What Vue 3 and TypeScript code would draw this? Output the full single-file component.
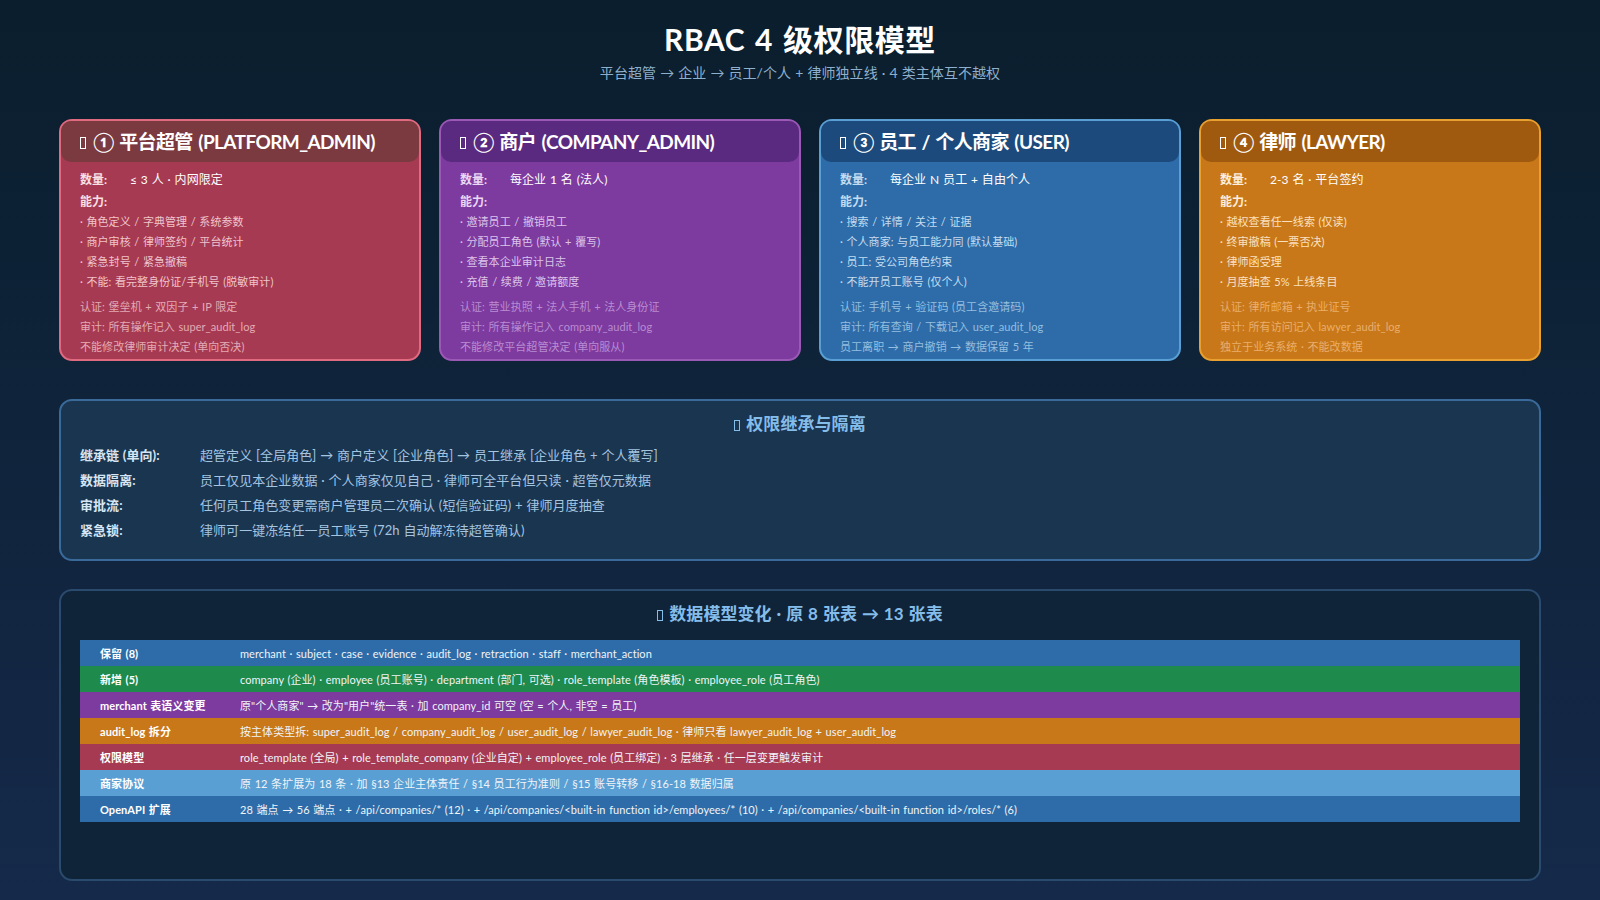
<template>
  <div class="page">
    <header class="head">
      <h1>RBAC 4 级权限模型</h1>
      <p>平台超管 → 企业 → 员工/个人 + 律师独立线 · 4 类主体互不越权</p>
    </header>

    <!-- 四个角色卡片 -->
    <section class="cards">
      <article v-for="c in cards" :key="c.key" class="card" :class="c.key">
        <h2 class="card-title"><i class="tofu"></i>{{ c.title }}</h2>
        <div class="card-body">
          <div class="line count"><b>数量:</b><span>{{ c.count }}</span></div>
          <div class="line"><b>能力:</b></div>
          <div v-for="a in c.abilities" :key="a" class="line ability">· {{ a }}</div>
          <div class="notes">
            <div v-for="n in c.notes" :key="n" class="line note">{{ n }}</div>
          </div>
        </div>
      </article>
    </section>

    <!-- 权限继承 -->
    <section class="inherit">
      <h3><i class="tofu small"></i>权限继承与隔离</h3>
      <div v-for="r in inheritRows" :key="r.label" class="inherit-row">
        <b>{{ r.label }}</b>
        <span>{{ r.text }}</span>
      </div>
    </section>

    <!-- 数据模型 -->
    <section class="model">
      <h3><i class="tofu small"></i>数据模型变化 · 原 8 张表 → 13 张表</h3>
      <div class="table">
        <div v-for="r in modelRows" :key="r.label" class="table-row" :class="r.color">
          <b>{{ r.label }}</b>
          <span>{{ r.text }}</span>
        </div>
      </div>
    </section>
  </div>
</template>

<script setup lang="ts">
const cards = [
  {
    key: 'red',
    title: '① 平台超管 (PLATFORM_ADMIN)',
    count: '≤ 3 人 · 内网限定',
    abilities: ['角色定义 / 字典管理 / 系统参数', '商户审核 / 律师签约 / 平台统计', '紧急封号 / 紧急撤稿', '不能: 看完整身份证/手机号 (脱敏审计)'],
    notes: ['认证: 堡垒机 + 双因子 + IP 限定', '审计: 所有操作记入 super_audit_log', '不能修改律师审计决定 (单向否决)'],
  },
  {
    key: 'purple',
    title: '② 商户 (COMPANY_ADMIN)',
    count: '每企业 1 名 (法人)',
    abilities: ['邀请员工 / 撤销员工', '分配员工角色 (默认 + 覆写)', '查看本企业审计日志', '充值 / 续费 / 邀请额度'],
    notes: ['认证: 营业执照 + 法人手机 + 法人身份证', '审计: 所有操作记入 company_audit_log', '不能修改平台超管决定 (单向服从)'],
  },
  {
    key: 'blue',
    title: '③ 员工 / 个人商家 (USER)',
    count: '每企业 N 员工 + 自由个人',
    abilities: ['搜索 / 详情 / 关注 / 证据', '个人商家: 与员工能力同 (默认基础)', '员工: 受公司角色约束', '不能开员工账号 (仅个人)'],
    notes: ['认证: 手机号 + 验证码 (员工含邀请码)', '审计: 所有查询 / 下载记入 user_audit_log', '员工离职 → 商户撤销 → 数据保留 5 年'],
  },
  {
    key: 'orange',
    title: '④ 律师 (LAWYER)',
    count: '2-3 名 · 平台签约',
    abilities: ['越权查看任一线索 (仅读)', '终审撤稿 (一票否决)', '律师函受理', '月度抽查 5% 上线条目'],
    notes: ['认证: 律所邮箱 + 执业证号', '审计: 所有访问记入 lawyer_audit_log', '独立于业务系统 · 不能改数据'],
  },
]

const inheritRows = [
  { label: '继承链 (单向):', text: '超管定义 [全局角色] → 商户定义 [企业角色] → 员工继承 [企业角色 + 个人覆写]' },
  { label: '数据隔离:', text: '员工仅见本企业数据 · 个人商家仅见自己 · 律师可全平台但只读 · 超管仅元数据' },
  { label: '审批流:', text: '任何员工角色变更需商户管理员二次确认 (短信验证码) + 律师月度抽查' },
  { label: '紧急锁:', text: '律师可一键冻结任一员工账号 (72h 自动解冻待超管确认)' },
]

const modelRows = [
  { label: '保留 (8)', color: 'blue', text: 'merchant · subject · case · evidence · audit_log · retraction · staff · merchant_action' },
  { label: '新增 (5)', color: 'green', text: 'company (企业) · employee (员工账号) · department (部门, 可选) · role_template (角色模板) · employee_role (员工角色)' },
  { label: 'merchant 表语义变更', color: 'purple', text: '原"个人商家" → 改为"用户"统一表 · 加 company_id 可空 (空 = 个人, 非空 = 员工)' },
  { label: 'audit_log 拆分', color: 'orange', text: '按主体类型拆: super_audit_log / company_audit_log / user_audit_log / lawyer_audit_log · 律师只看 lawyer_audit_log + user_audit_log' },
  { label: '权限模型', color: 'red', text: 'role_template (全局) + role_template_company (企业自定) + employee_role (员工绑定) · 3 层继承 · 任一层变更触发审计' },
  { label: '商家协议', color: 'sky', text: '原 12 条扩展为 18 条 · 加 §13 企业主体责任 / §14 员工行为准则 / §15 账号转移 / §16-18 数据归属' },
  { label: 'OpenAPI 扩展', color: 'blue', text: '28 端点 → 56 端点 · + /api/companies/* (12) · + /api/companies/<built-in function id>/employees/* (10) · + /api/companies/<built-in function id>/roles/* (6)' },
]
</script>

<style scoped>
.page {
  width: 1600px;
  height: 900px;
  box-sizing: border-box;
  padding: 20px 59px 0;
  overflow: hidden;
  background: linear-gradient(180deg, #0a1e2d 0%, #15294a 100%);
  font-family: Lato, "Noto Sans CJK SC", sans-serif;
  color: #fff;
  word-spacing: 0.7px;
  letter-spacing: 0.06px;
}

.head {
  text-align: center;
  height: 99px;
}

.head h1 {
  margin: 0;
  font-size: 30px;
  line-height: 38px;
  font-weight: 700;
  letter-spacing: 0.6px;
  word-spacing: 2px;
  color: #fff;
}

.head p {
  margin: 5px 0 0;
  font-size: 14px;
  line-height: 20px;
  word-spacing: 0.4px;
  color: #8fb0cc;
}

.tofu {
  display: inline-block;
  width: 6px;
  height: 12px;
  margin-right: 7px;
  border: 1px solid currentColor;
  box-sizing: border-box;
  vertical-align: 0;
}

.tofu.small {
  height: 11px;
  margin-right: 6px;
  vertical-align: -1px;
}

.cards {
  display: grid;
  grid-template-columns: 362px 362px 362px 342px;
  gap: 18px;
}

.card {
  height: 242px;
  box-sizing: border-box;
  border: 2px solid;
  border-radius: 13px;
}

.card-title {
  margin: 0;
  height: 41px;
  padding-left: 19px;
  border-radius: 10px;
  font-size: 19px;
  line-height: 41px;
  font-weight: 700;
  letter-spacing: -0.6px;
  word-spacing: 1.5px;
  color: #fff;
  white-space: nowrap;
}

.card-body {
  padding: 8px 0 0 19px;
}

.line {
  font-size: 11px;
  line-height: 20px;
  white-space: nowrap;
}

.line b {
  font-size: 12px;
  font-weight: 700;
}

.count {
  display: flex;
  margin-bottom: 2px;
}

.count b {
  width: 50px;
}

.count span {
  font-size: 12px;
  color: #fff;
}

.notes {
  margin-top: 5px;
}

.red { background: #a63a52; border-color: #e06a80; }
.red .card-title { background: #7a3a40; }
.red .line b { color: #f8e0e4; }
.red .ability { color: #f0c4cc; }
.red .note { color: #e4aab4; }

.purple { background: #7d3a9f; border-color: #9b59b6; }
.purple .card-title { background: #5a2a80; }
.purple .line b { color: #ead8f4; }
.purple .ability { color: #dcc4ea; }
.purple .note { color: #b98cd2; }

.blue { background: #2d6ca8; border-color: #5a9fd4; }
.blue .card-title { background: #1c4a7c; }
.blue .line b { color: #c4dcf0; }
.blue .ability { color: #c4dcf0; }
.blue .note { color: #94bee0; }

.orange { background: #c87818; border-color: #e8a030; }
.orange .card-title { background: #a05a10; }
.orange .line b { color: #fdeedd; }
.orange .ability { color: #fbe0c0; }
.orange .note { color: #eaae6c; }

.inherit {
  height: 162px;
  box-sizing: border-box;
  margin-top: 38px;
  padding: 0 19px;
  border: 2px solid #3a6a9a;
  border-radius: 13px;
  background: #1a3550;
}

.inherit h3,
.model h3 {
  margin: 0;
  text-align: center;
  font-size: 17px;
  font-weight: 700;
  color: #85bdea;
}

.inherit h3 {
  padding: 12px 0 7px;
  line-height: 22px;
}

.inherit-row {
  display: flex;
  height: 25px;
  align-items: center;
  font-size: 13px;
  word-spacing: 0.4px;
}

.inherit-row b {
  width: 120px;
  color: #d6e6f4;
  font-weight: 700;
}

.inherit-row span {
  color: #a4c4e0;
}

.model {
  height: 292px;
  box-sizing: border-box;
  margin-top: 28px;
  padding: 0 19px;
  border: 2px solid #2a4a6e;
  border-radius: 13px;
  background: #0f2438;
}

.model h3 {
  padding: 10px 0 13px;
  line-height: 26px;
}

.table-row {
  display: flex;
  height: 26px;
  box-sizing: border-box;
  align-items: center;
  padding: 0.5px 0 0 20px;
  font-size: 11px;
  white-space: nowrap;
}

.table-row b {
  width: 140px;
  flex: none;
  font-weight: 700;
  color: #fff;
}

.table-row span {
  color: #f0f4f8;
}

.table-row.blue { background: #2d6ca8; }
.table-row.green { background: #1e8a4c; }
.table-row.purple { background: #7d3a9f; }
.table-row.orange { background: #c87818; }
.table-row.red { background: #a63a52; }
.table-row.sky { background: #5a9fd4; }
</style>
